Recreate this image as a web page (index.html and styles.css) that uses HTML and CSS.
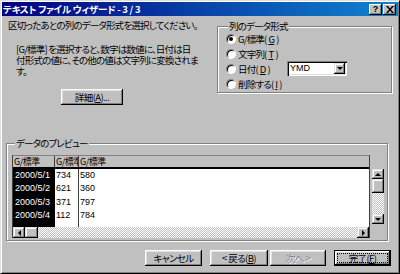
FILE: index.html
```html
<!DOCTYPE html>
<html lang="ja">
<head>
    <meta charset="UTF-8">
    <title>テキスト ファイル ウィザード - 3 / 3</title>
    <link rel="stylesheet" href="styles.css">
</head>
<body>
    <div class="window">
        <div class="titlebar">
            <span class="title">テキスト ファイル ウィザード - 3 / 3</span>
            <div class="caption-buttons">
                <button class="cap-btn help">?</button>
                <button class="cap-btn close">
                    <svg width="8" height="7" viewBox="0 0 8 7">
                        <path d="M0 0h2l2 2.5L6 0h2L5 3.5 8 7H6L4 4.5 2 7H0l3-3.5z" fill="#000"/>
                    </svg>
                </button>
            </div>
        </div>

        <div class="dialog">
            <div class="top">
                <div class="intro">
                    <p class="lead">区切ったあとの列のデータ形式を選択してください。</p>
                    <p class="note">[G/標準] を選択すると、数字は数値に、日付は日<br>付形式の値に、その他の値は文字列に変換されま<br>す。</p>
                    <button class="btn detail">詳細(<u>A</u>)...</button>
                </div>

                <fieldset class="group format">
                    <legend>列のデータ形式</legend>
                    <div class="radios">
                        <div class="radio-row">
                            <span class="radio"><span class="dot checked"></span>G/標準(<u>G</u>)</span>
                        </div>
                        <div class="radio-row">
                            <span class="radio"><span class="dot"></span>文字列(<u>T</u>)</span>
                        </div>
                        <div class="radio-row date-row">
                            <span class="radio"><span class="dot"></span>日付(<u>D</u>)</span>
                            <div class="select">
                                <span class="select-value">YMD</span>
                                <span class="select-btn"><span class="tri down"></span></span>
                            </div>
                        </div>
                        <div class="radio-row">
                            <span class="radio"><span class="dot"></span>削除する(<u>I</u>)</span>
                        </div>
                    </div>
                </fieldset>
            </div>

            <fieldset class="group preview">
                <legend>データのプレビュー</legend>
                <div class="grid-wrap">
                    <div class="grid">
                        <div class="grid-head">
                            <div class="hcell c1">G/標準</div>
                            <div class="hcell c2">G/標準</div>
                            <div class="hcell c3">G/標準</div>
                        </div>
                        <div class="grid-body">
                            <div class="col c1 selected">
                                <div class="cell">2000/5/1</div>
                                <div class="cell">2000/5/2</div>
                                <div class="cell">2000/5/3</div>
                                <div class="cell">2000/5/4</div>
                            </div>
                            <div class="col c2">
                                <div class="cell">734</div>
                                <div class="cell">621</div>
                                <div class="cell">371</div>
                                <div class="cell">112</div>
                            </div>
                            <div class="col c3">
                                <div class="cell">580</div>
                                <div class="cell">360</div>
                                <div class="cell">797</div>
                                <div class="cell">784</div>
                            </div>
                        </div>
                        <div class="hscroll">
                            <span class="sb-btn"><span class="tri left"></span></span>
                            <span class="sb-thumb h"></span>
                            <span class="sb-track"></span>
                            <span class="sb-btn"><span class="tri right"></span></span>
                        </div>
                    </div>
                    <div class="vscroll">
                        <span class="sb-btn"><span class="tri up"></span></span>
                        <span class="sb-thumb v"></span>
                        <span class="sb-track"></span>
                        <span class="sb-btn"><span class="tri down"></span></span>
                    </div>
                </div>
            </fieldset>

            <div class="actions">
                <button class="btn">キャンセル</button>
                <button class="btn back">&lt; 戻る(<u>B</u>)</button>
                <button class="btn next" disabled>次へ &gt;</button>
                <button class="btn finish"><span class="focus">完了(<u>F</u>)</span></button>
            </div>
        </div>
    </div>
</body>
</html>
```

FILE: styles.css
```css
:root {
    --face: #c0c0c0;
    --light: #dfdfdf;
    --shadow: #808080;
    --dark: #000;
}

* {
    margin: 0;
    padding: 0;
    box-sizing: border-box;
}

body {
    width: 400px;
    height: 274px;
    overflow: hidden;
    background: var(--face);
    font-family: "Noto Sans CJK JP", sans-serif;
    font-size: 9.5px;
    letter-spacing: -0.8px;
    font-feature-settings: "palt";
    color: #000;
}

u {
    text-decoration: underline;
    text-underline-offset: 1px;
}

.window {
    width: 400px;
    height: 274px;
    padding: 1px;
    border: 1px solid;
    border-color: var(--light) var(--dark) var(--dark) var(--light);
    box-shadow: inset 1px 1px #fff, inset -1px -1px var(--shadow);
    display: flex;
    flex-direction: column;
}

/* Title bar */
.titlebar {
    height: 14px;
    background: linear-gradient(90deg, #000080, #1084d0);
    display: flex;
    align-items: center;
    justify-content: space-between;
    padding: 0 2px 0 1px;
    color: #fff;
    font-weight: bold;
    font-size: 9.5px;
    letter-spacing: -0.25px;
    line-height: 14px;
    white-space: pre;
}

.caption-buttons {
    display: flex;
    gap: 1px;
}

.cap-btn {
    width: 13px;
    height: 11px;
    border: none;
    background: var(--face);
    box-shadow: inset -1px -1px var(--dark), inset 1px 1px #fff, inset -2px -2px var(--shadow);
    display: flex;
    align-items: center;
    justify-content: center;
    font-family: "Liberation Sans", sans-serif;
    font-weight: bold;
    font-size: 9px;
    letter-spacing: 0;
    line-height: 1;
    color: #000;
}

/* Dialog body */
.dialog {
    flex: 1;
    padding: 3px 6px 0 4px;
}

.top {
    display: flex;
    align-items: flex-start;
}

.intro {
    flex: 0 0 211px;
    min-width: 0;
    padding-left: 2px;
}

.lead {
    line-height: 12px;
    white-space: nowrap;
}

.note {
    margin: 13px 0 0 8px;
    line-height: 11px;
    white-space: nowrap;
}

.btn {
    height: 16px;
    border: none;
    background: var(--face);
    box-shadow: inset -1px -1px var(--dark), inset 1px 1px #fff, inset -2px -2px var(--shadow), inset 2px 2px var(--light);
    font-family: inherit;
    font-size: 9.5px;
    letter-spacing: -0.6px;
    font-feature-settings: "palt";
    line-height: 14px;
    color: #000;
    display: flex;
    align-items: center;
    justify-content: center;
    white-space: nowrap;
}

.detail {
    width: 62px;
    margin: 12px 0 0 53px;
}

/* Group boxes */
.group {
    border: 1px solid var(--shadow);
    box-shadow: inset 1px 1px #fff, 1px 1px #fff;
}

.group legend {
    line-height: 12px;
    padding: 0 1px;
    background: var(--face);
}

.format {
    flex: 0 0 175px;
    margin-top: 1px;
    padding: 0 0 1px 8px;
}

.format legend {
    margin-left: 2px;
}

.radios {
    margin-top: -1px;
}

.radio-row {
    height: 15px;
    display: flex;
    align-items: center;
}

.radio {
    display: flex;
    align-items: center;
    gap: 2px;
    white-space: nowrap;
}

.date-row .radio {
    width: 61px;
}

.dot {
    width: 10px;
    height: 10px;
    border-radius: 50%;
    background: #fff;
    border: 1px solid;
    border-color: var(--shadow) #fff #fff var(--shadow);
    box-shadow: inset 1px 1px var(--dark);
    display: flex;
    align-items: center;
    justify-content: center;
}

.dot.checked::after {
    content: "";
    width: 4px;
    height: 4px;
    border-radius: 50%;
    background: #000;
}

.select {
    width: 60px;
    height: 15px;
    background: #fff;
    box-shadow: inset 1px 1px var(--shadow), inset 2px 2px var(--dark), inset -1px -1px #fff, inset -2px -2px var(--light);
    display: flex;
    align-items: center;
    padding: 2px;
}

.select-value {
    flex: 1;
    padding-left: 1px;
    font-family: "Liberation Sans", sans-serif;
    font-size: 9px;
    letter-spacing: 0;
    line-height: 11px;
}

.select-btn,
.sb-btn {
    background: var(--face);
    box-shadow: inset -1px -1px var(--dark), inset 1px 1px var(--light), inset -2px -2px var(--shadow), inset 2px 2px #fff;
    display: flex;
    align-items: center;
    justify-content: center;
}

.select-btn {
    width: 11px;
    height: 11px;
}

.tri {
    width: 0;
    height: 0;
    border: 3px solid transparent;
}

.tri.down {
    border-bottom: 0;
    border-top: 3px solid #000;
}

.tri.up {
    border-top: 0;
    border-bottom: 3px solid #000;
}

.tri.left {
    border-left: 0;
    border-right: 3px solid #000;
}

.tri.right {
    border-right: 0;
    border-left: 3px solid #000;
}

/* Preview */
.preview {
    width: 382px;
    margin-top: 32px;
    padding: 0 3px 2px 5px;
}

.preview legend {
    margin-left: 3px;
}

.grid-wrap {
    margin-top: 6px;
    display: flex;
    gap: 2px;
}

.grid {
    width: 358px;
    height: 83px;
    border-left: 1px solid #404040;
    border-right: 1px solid #404040;
    display: flex;
    flex-direction: column;
}

.grid-head {
    height: 14px;
    display: flex;
    border-top: 1px solid var(--shadow);
    border-bottom: 2px solid var(--dark);
    font-size: 9px;
    letter-spacing: -0.5px;
    line-height: 11px;
}

.hcell {
    overflow: hidden;
    white-space: nowrap;
    padding-left: 1px;
    border-right: 1px solid #404040;
}

.c1 {
    width: 42px;
}

.c2 {
    width: 24px;
}

.c3 {
    flex: 1;
    border-right: none;
}

.grid-body {
    height: 58px;
    display: flex;
    background: #fff;
    font-family: "Liberation Sans", sans-serif;
    font-size: 9px;
    letter-spacing: 0;
}

.col {
    padding-left: 1px;
}

.col.c2 {
    border-right: 1px solid #404040;
}

.col.selected {
    background: #000;
    color: #fff;
    padding-left: 2px;
}

.cell {
    height: 13.4px;
    line-height: 12px;
    white-space: nowrap;
}

.hscroll {
    height: 11px;
    display: flex;
}

.hscroll .sb-btn {
    width: 12px;
}

.sb-thumb {
    background: var(--face);
    box-shadow: inset -1px -1px var(--dark), inset 1px 1px var(--light), inset -2px -2px var(--shadow), inset 2px 2px #fff;
}

.sb-thumb.h {
    width: 13px;
}

.sb-track {
    flex: 1;
    background: repeating-conic-gradient(#fff 0 25%, var(--face) 0 50%) 0 0 / 2px 2px;
}

.vscroll {
    width: 12px;
    height: 55px;
    margin-top: 14px;
    display: flex;
    flex-direction: column;
}

.vscroll .sb-btn {
    height: 10px;
}

.sb-thumb.v {
    height: 14px;
}

/* Bottom buttons */
.actions {
    margin-top: 9px;
    padding-right: 1px;
    display: flex;
    justify-content: flex-end;
}

.actions .btn {
    width: 57px;
}

.actions .back {
    width: 58px;
    margin-left: 8px;
}

.actions .next {
    width: 56px;
    margin-left: 2px;
    color: var(--shadow);
    text-shadow: 1px 1px #fff;
}

.actions .finish {
    margin-left: 8px;
    border: 1px solid var(--dark);
    box-shadow: inset -1px -1px var(--dark), inset 1px 1px #fff, inset -2px -2px var(--shadow), inset 2px 2px var(--light);
    padding: 2px;
}

.focus {
    flex: 1;
    align-self: stretch;
    display: flex;
    align-items: center;
    justify-content: center;
    outline: 1px dotted #000;
    outline-offset: -1px;
}
```
